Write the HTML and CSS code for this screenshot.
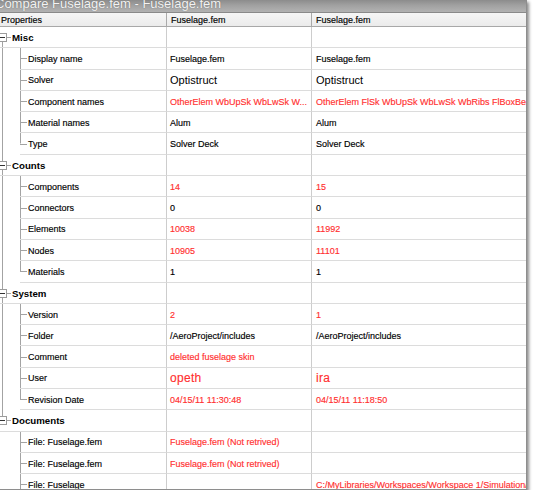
FILE: index.html
```html
<!DOCTYPE html>
<html>
<head>
<meta charset="utf-8">
<title>Compare Fuselage.fem - Fuselage.fem</title>
<link rel="stylesheet" href="styles.css">
</head>
<body>
<div class="window">
  <div class="titlebar"><span class="title">Compare Fuselage.fem - Fuselage.fem</span></div>
  <div class="grid">
    <div class="row head">
      <div class="hcell prop">Properties</div>
      <div class="hcell">Fuselage.fem</div>
      <div class="hcell">Fuselage.fem</div>
    </div>

    <div class="row cat first">
      <div class="catname"><span class="box"><i></i></span><span class="dash"></span>Misc</div>
      <div class="val"></div><div class="val"></div>
    </div>
    <div class="row child">
      <div class="indent"></div><div class="name"><span class="tick"></span>Display name</div>
      <div class="val">Fuselage.fem</div><div class="val">Fuselage.fem</div>
    </div>
    <div class="row child">
      <div class="indent"></div><div class="name"><span class="tick"></span>Solver</div>
      <div class="val big">Optistruct</div><div class="val big">Optistruct</div>
    </div>
    <div class="row child">
      <div class="indent"></div><div class="name"><span class="tick"></span>Component names</div>
      <div class="val diff">OtherElem WbUpSk WbLwSk W...</div><div class="val diff">OtherElem FlSk WbUpSk WbLwSk WbRibs FlBoxBeam WbSpars</div>
    </div>
    <div class="row child">
      <div class="indent"></div><div class="name"><span class="tick"></span>Material names</div>
      <div class="val">Alum</div><div class="val">Alum</div>
    </div>
    <div class="row child last">
      <div class="indent"></div><div class="name"><span class="tick"></span>Type</div>
      <div class="val">Solver Deck</div><div class="val">Solver Deck</div>
    </div>

    <div class="row cat">
      <div class="catname"><span class="box"><i></i></span><span class="dash"></span>Counts</div>
      <div class="val"></div><div class="val"></div>
    </div>
    <div class="row child">
      <div class="indent"></div><div class="name"><span class="tick"></span>Components</div>
      <div class="val diff">14</div><div class="val diff">15</div>
    </div>
    <div class="row child">
      <div class="indent"></div><div class="name"><span class="tick"></span>Connectors</div>
      <div class="val">0</div><div class="val">0</div>
    </div>
    <div class="row child">
      <div class="indent"></div><div class="name"><span class="tick"></span>Elements</div>
      <div class="val diff">10038</div><div class="val diff">11992</div>
    </div>
    <div class="row child">
      <div class="indent"></div><div class="name"><span class="tick"></span>Nodes</div>
      <div class="val diff">10905</div><div class="val diff">11101</div>
    </div>
    <div class="row child last">
      <div class="indent"></div><div class="name"><span class="tick"></span>Materials</div>
      <div class="val">1</div><div class="val">1</div>
    </div>

    <div class="row cat">
      <div class="catname"><span class="box"><i></i></span><span class="dash"></span>System</div>
      <div class="val"></div><div class="val"></div>
    </div>
    <div class="row child">
      <div class="indent"></div><div class="name"><span class="tick"></span>Version</div>
      <div class="val diff">2</div><div class="val diff">1</div>
    </div>
    <div class="row child">
      <div class="indent"></div><div class="name"><span class="tick"></span>Folder</div>
      <div class="val">/AeroProject/includes</div><div class="val">/AeroProject/includes</div>
    </div>
    <div class="row child">
      <div class="indent"></div><div class="name"><span class="tick"></span>Comment</div>
      <div class="val diff">deleted fuselage skin</div><div class="val"></div>
    </div>
    <div class="row child">
      <div class="indent"></div><div class="name"><span class="tick"></span>User</div>
      <div class="val diff user">opeth</div><div class="val diff user">ira</div>
    </div>
    <div class="row child last">
      <div class="indent"></div><div class="name"><span class="tick"></span>Revision Date</div>
      <div class="val diff">04/15/11 11:30:48</div><div class="val diff">04/15/11 11:18:50</div>
    </div>

    <div class="row cat lastcat">
      <div class="catname"><span class="box"><i></i></span><span class="dash"></span>Documents</div>
      <div class="val"></div><div class="val"></div>
    </div>
    <div class="row child nl">
      <div class="indent"></div><div class="name"><span class="tick"></span>File: Fuselage.fem</div>
      <div class="val diff">Fuselage.fem (Not retrived)</div><div class="val"></div>
    </div>
    <div class="row child nl">
      <div class="indent"></div><div class="name"><span class="tick"></span>File: Fuselage.fem</div>
      <div class="val diff">Fuselage.fem (Not retrived)</div><div class="val"></div>
    </div>
    <div class="row child nl">
      <div class="indent"></div><div class="name"><span class="tick"></span>File: Fuselage</div>
      <div class="val"></div><div class="val diff">C:/MyLibraries/Workspaces/Workspace 1/Simulation/Fuselage</div>
    </div>
  </div>
</div>
</body>
</html>
```

FILE: styles.css
```css
* { box-sizing: border-box; }

body {
  margin: 0;
  background: #ffffff;
  font-family: "Liberation Sans", Arial, sans-serif;
  color: #000;
}

.window {
  width: 527px;
  height: 490px;
  overflow: hidden;
  background: #ffffff;
  border-right: 1px solid #8e8e8e;
  border-bottom: 1px solid #8e8e8e;
  box-shadow: 2px 2px 3px rgba(0, 0, 0, 0.45);
}

.titlebar {
  height: 12px;
  overflow: hidden;
  background: linear-gradient(#8c8c8c, #a1a1a1 45%, #b2b2b2);
}

.title {
  display: block;
  margin: -4px 0 0 -5px;
  font-size: 13px;
  line-height: 15px;
  color: #f3f3f3;
  white-space: nowrap;
  text-shadow: 0 0 1px rgba(60, 60, 60, 0.6);
}

.row {
  display: grid;
  grid-template-columns: 20px 146px 145px 1fr;
  height: 21.3px;
  font-size: 9px;
}

.head {
  height: 15px;
  background: linear-gradient(#f6f6f6, #ebebeb);
  border-top: 1px solid #8a8a8a;
  border-bottom: 1px solid #a8a8a8;
}

.hcell {
  display: flex;
  align-items: center;
  padding: 1px 0 0 4px;
  border-left: 1px solid #a9a9a9;
  white-space: nowrap;
  overflow: hidden;
  color: #000;
  -webkit-text-stroke: 0.15px #000;
}

.hcell.prop {
  grid-column: 1 / 3;
  border-left: none;
  padding-left: 1px;
}

.indent {
  background: linear-gradient(#a3a3a3, #a3a3a3) 2px 0 / 1px 100% no-repeat;
}

.nl .indent {
  background: none;
}

.name {
  display: flex;
  align-items: center;
  padding-top: 1px;
  border-bottom: 1px solid #dcdcdc;
  white-space: nowrap;
  overflow: hidden;
  color: #000;
  -webkit-text-stroke: 0.15px #000;
  background: linear-gradient(#a3a3a3, #a3a3a3) 0 0 / 1px 100% no-repeat;
}

.last .name {
  background-size: 1px 50%;
}

.tick {
  flex: none;
  width: 7px;
  height: 1px;
  margin-right: 1px;
  background: #a3a3a3;
}

.catname {
  grid-column: 1 / 3;
  display: flex;
  align-items: center;
  padding-top: 1px;
  font-weight: bold;
  font-size: 9.7px;
  border-bottom: 1px solid #dcdcdc;
  white-space: nowrap;
  background: linear-gradient(#a3a3a3, #a3a3a3) 2px 0 / 1px 100% no-repeat;
}

.first .catname {
  background-position: 2px 100%;
  background-size: 1px 50%;
}

.lastcat .catname {
  background-size: 1px 50%;
}

.box {
  flex: none;
  width: 9px;
  height: 9px;
  margin-left: -2px;
  border: 1px solid #9c9c9c;
  background: #ffffff;
  display: flex;
  align-items: center;
  justify-content: center;
}

.box i {
  width: 5px;
  height: 1px;
  background: #333;
}

.dash {
  flex: none;
  width: 4px;
  height: 1px;
  margin-right: 1px;
  background: #a3a3a3;
}

.val {
  display: flex;
  align-items: center;
  padding: 1px 0 0 3px;
  border-left: 1px solid #cdcdcd;
  border-bottom: 1px solid #dcdcdc;
  white-space: nowrap;
  overflow: hidden;
  color: #000;
  -webkit-text-stroke: 0.15px currentColor;
}

.val + .val {
  padding-left: 4px;
}

.diff {
  color: #ff3030;
}

.big {
  font-size: 11px;
  color: #000;
  -webkit-text-stroke: 0;
}

.user {
  font-size: 12px;
  letter-spacing: 0.3px;
}
```
